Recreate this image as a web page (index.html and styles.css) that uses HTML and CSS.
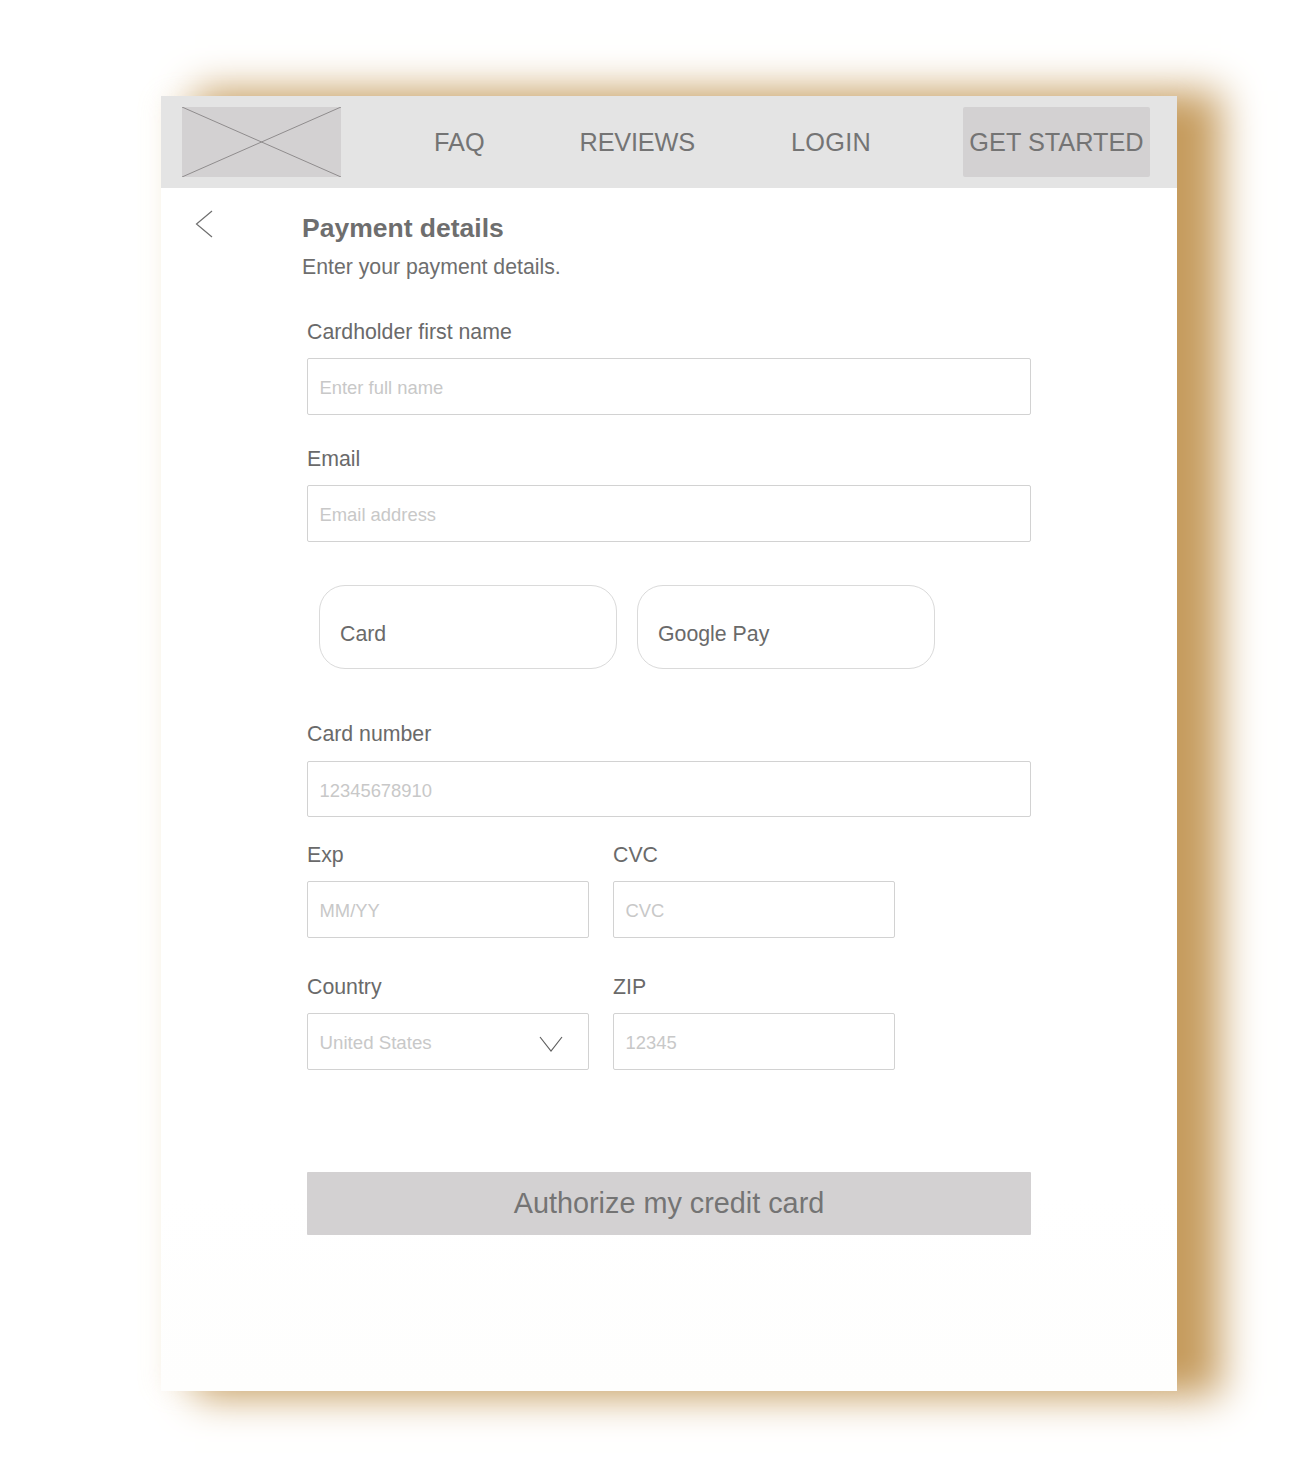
FILE: index.html
```html
<!DOCTYPE html>
<html lang="en">
<head>
<meta charset="utf-8">
<title>Payment details</title>
<link rel="stylesheet" href="styles.css">
</head>
<body>
<div class="card">
  <header class="topbar">
    <svg class="logo" viewBox="0 0 159 70" aria-label="Logo placeholder"><rect width="159" height="70" fill="#d3d1d2"/><path d="M0 0L159 70M159 0L0 70" stroke="#8f8c8d" stroke-width="1" fill="none"/></svg>
    <nav class="nav">
      <a class="nav-faq">FAQ</a>
      <a class="nav-reviews">REVIEWS</a>
      <a class="nav-login">LOGIN</a>
      <a class="nav-cta">GET STARTED</a>
    </nav>
  </header>
  <main class="content">
    <div class="back-col">
      <svg class="back" viewBox="0 0 18 28" aria-label="Back"><path d="M17 1L1.500 14L17 27" fill="none" stroke="#6f6f6f" stroke-width="1.200"/></svg>
    </div>
    <div class="main-col">
      <h1 class="title">Payment details</h1>
      <p class="subtitle">Enter your payment details.</p>
      <form class="form">
        <div class="field">
          <label class="label">Cardholder first name</label>
          <input class="input" placeholder="Enter full name">
        </div>
        <div class="field field-email">
          <label class="label">Email</label>
          <input class="input" placeholder="Email address">
        </div>
        <div class="tabs">
          <div class="tab">Card</div>
          <div class="tab">Google Pay</div>
        </div>
        <div class="field field-number">
          <label class="label">Card number</label>
          <input class="input input-short" placeholder="12345678910">
        </div>
        <div class="pair pair-exp">
          <div class="field">
            <label class="label">Exp</label>
            <input class="input" placeholder="MM/YY">
          </div>
          <div class="field">
            <label class="label">CVC</label>
            <input class="input" placeholder="CVC">
          </div>
        </div>
        <div class="pair pair-country">
          <div class="field">
            <label class="label">Country</label>
            <div class="select">
              <span>United States</span>
              <svg class="chevron" viewBox="0 0 24 16" aria-hidden="true"><path d="M1 1L12 15L23 1" fill="none" stroke="#5f5f5f" stroke-width="1.200"/></svg>
            </div>
          </div>
          <div class="field">
            <label class="label">ZIP</label>
            <input class="input" placeholder="12345">
          </div>
        </div>
        <button class="submit" type="button">Authorize my credit card</button>
      </form>
    </div>
  </main>
</div>
</body>
</html>
```
FILE: styles.css
```css
* { box-sizing: border-box; }
html, body { margin: 0; background: #fff; }
body {
  padding: 96px 116px 88px 161px;
  font-family: "Liberation Sans", Arial, sans-serif;
  color: #6d6d6d;
}
.card {
  width: 1016px;
  height: 1295px;
  background: linear-gradient(#fff 85%, #fefefd);
  box-shadow: 39px 0 38px 5px #c69c5e, 0 0 24px rgba(230, 205, 160, .16);
}
.topbar {
  height: 92px;
  background: #e4e4e4;
  display: flex;
  align-items: center;
  padding: 0 27px 0 21px;
}
.logo { width: 159px; height: 70px; flex: none; }
.nav {
  flex: 1;
  display: flex;
  align-items: center;
  font-size: 25.300px;
  color: #747474;
}
.nav-faq { margin-left: 93px; }
.nav-reviews { margin-left: 95px; letter-spacing: -.2px; }
.nav-login { margin-left: 96px; letter-spacing: .3px; }
.nav-cta {
  margin-left: auto;
  width: 187px;
  height: 70px;
  background: #d3d1d2;
  border-radius: 2px;
  display: flex;
  align-items: center;
  justify-content: center;
  white-space: nowrap;
}
.content { display: flex; }
.back-col { width: 141px; padding: 22px 0 0 34px; flex: none; }
.back { display: block; width: 18px; height: 28px; }
.main-col { width: 729px; padding-top: 24px; }
.title {
  margin: 0;
  font-size: 26.500px;
  line-height: 32px;
  font-weight: 700;
  color: #6e6e6e;
}
.subtitle {
  margin: 11px 0 0;
  font-size: 21.250px;
  line-height: 24px;
  color: #6e6e6e;
}
.form { margin: 41px 0 0 5px; width: 724px; }
.field { display: flex; flex-direction: column; }
.field-email { margin-top: 32px; }
.label {
  font-size: 21.300px;
  line-height: 24px;
  height: 24px;
  color: #6a6a6a;
  margin-bottom: 14px;
}
.field-number .label { margin-bottom: 15px; }
.input, .select {
  width: 100%;
  height: 57px;
  border: 1px solid #d2d2d2;
  border-radius: 2px;
  background: #fff;
  padding: 3px 11.500px 0;
  font: 18.400px "Liberation Sans", Arial, sans-serif;
  color: #c8c8c8;
  outline: none;
}
.input-short { height: 56px; }
.input::placeholder { color: #c8c8c8; opacity: 1; }
.select {
  display: flex;
  align-items: center;
  justify-content: space-between;
  padding-right: 25px;
  font-size: 18.700px;
}
.chevron { width: 24px; height: 16px; margin-top: 2px; }
.tabs {
  display: flex;
  gap: 20px;
  margin: 43px 0 53px 12px;
}
.tab {
  width: 298px;
  height: 84px;
  border: 1px solid #dadada;
  border-radius: 26px;
  padding: 36px 0 0 20px;
  font-size: 21.300px;
  line-height: 24px;
  color: #6a6a6a;
}
.pair {
  display: grid;
  grid-template-columns: 282px 282px;
  column-gap: 24px;
}
.pair-exp { margin-top: 26px; }
.pair-country { margin-top: 37px; }
.submit {
  display: block;
  width: 724px;
  height: 63px;
  margin-top: 102px;
  border: 0;
  border-radius: 1px;
  background: #d3d1d2;
  color: #747474;
  font: 28.800px "Liberation Sans", Arial, sans-serif;
}
```
